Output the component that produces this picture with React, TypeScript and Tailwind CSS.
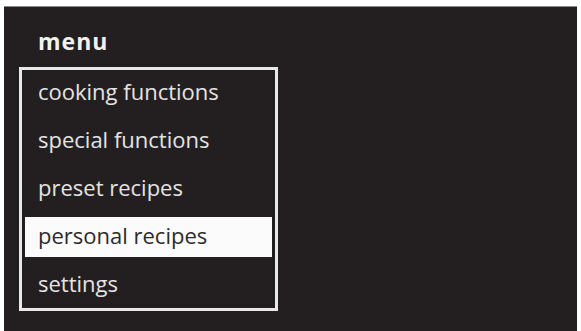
import React from 'react';

const items = ['cooking functions', 'special functions', 'preset recipes', 'personal recipes', 'settings'];
const selected = 3;

const App: React.FC = () => {
  return (
    <div className="w-[581px] h-[331px] bg-white pt-[6px] pl-[4px] pr-[4px] overflow-hidden">
      <div
        className="h-[325px] w-[573px] bg-[#231f20] border-t border-[#8a8a8a] pl-[15px] pt-[23px]"
        style={{ fontFamily: '"Open Sans", "Noto Sans", sans-serif' }}
      >
        {/* Title */}
        <h1 className="pl-[19px] text-[23px] leading-[23px] font-bold text-[#f2f2f2] tracking-[1px]">menu</h1>

        {/* Menu list */}
        <div className="mt-[14px] w-[259px] border-[3px] border-[#e9e9e9] p-[3px] flex flex-col gap-[8px]">
          {items.map((label, i) => (
            <div
              key={label}
              className={`h-[40px] flex items-center pl-[13px] pb-[3px] text-[22px] ${
                i === selected ? 'bg-[#fbfbfb] text-[#2e2a2b]' : 'text-[#e4e4e4]'
              }`}
            >
              {label}
            </div>
          ))}
        </div>
      </div>
    </div>
  );
};

export default App;
